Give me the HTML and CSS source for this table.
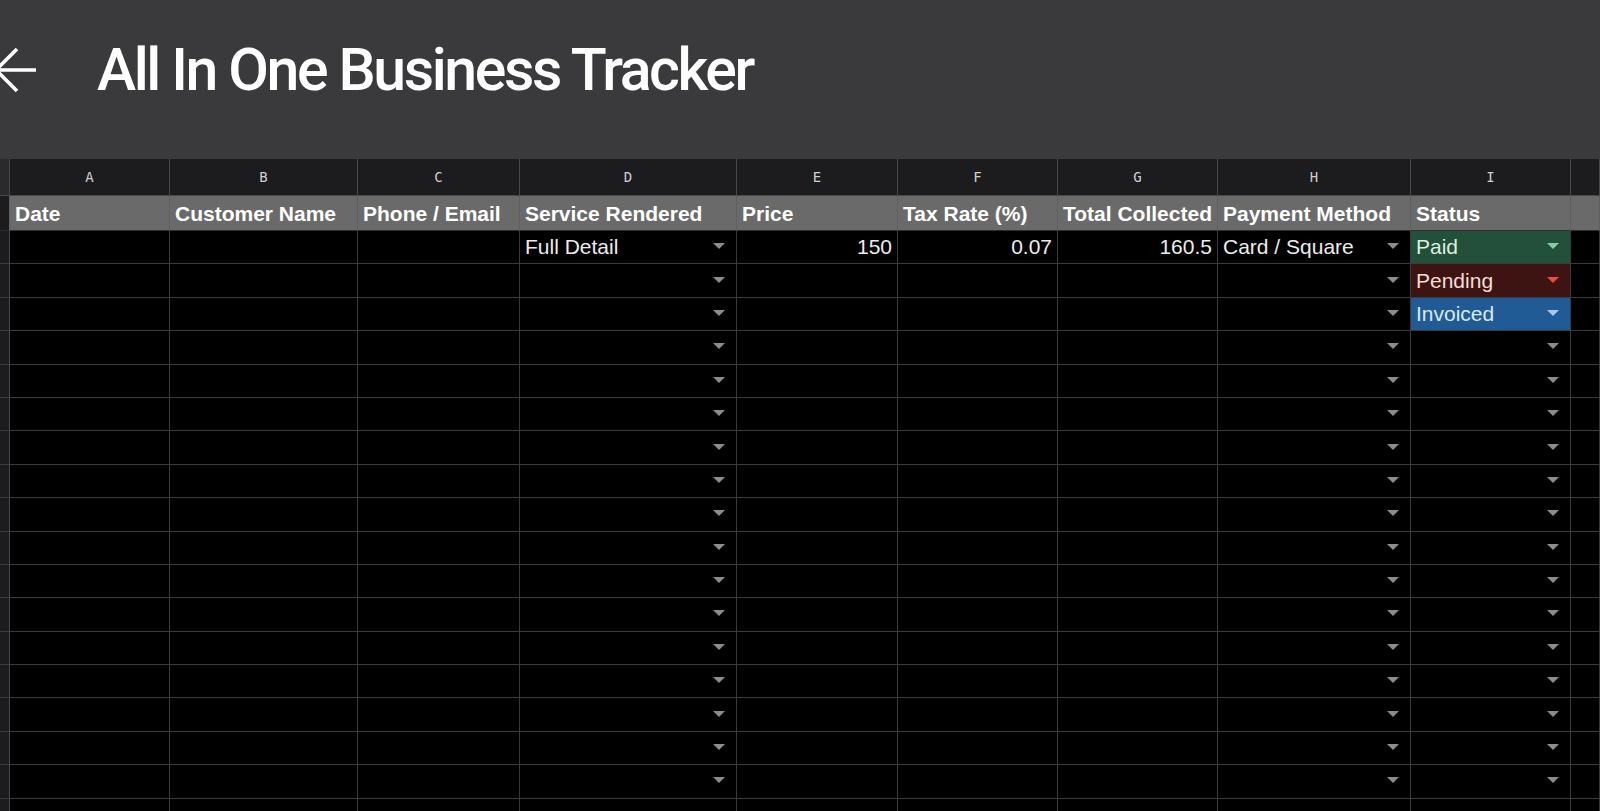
FILE: index.html
```html
<!DOCTYPE html>
<html>
<head>
<meta charset="utf-8">
<link rel="stylesheet" href="styles.css">
</head>
<body>
<header class="topbar">
  <svg class="back" width="44" height="46" viewBox="0 0 44 46">
    <path d="M42 23 H3 M23 2 L2 23 L23 44" fill="none" stroke="#fff" stroke-width="3.6" stroke-linejoin="miter"/>
  </svg>
  <h1 class="title">All In One Business Tracker</h1>
</header>
<main class="sheet">
  <div class="c rh lt"></div>
  <div class="c lt">A</div><div class="c lt">B</div><div class="c lt">C</div><div class="c lt">D</div><div class="c lt">E</div><div class="c lt">F</div><div class="c lt">G</div><div class="c lt">H</div><div class="c lt">I</div><div class="c lt"></div>

  <div class="c rh hd"></div>
  <div class="c hd">Date</div><div class="c hd">Customer Name</div><div class="c hd">Phone / Email</div><div class="c hd">Service Rendered</div><div class="c hd">Price</div><div class="c hd">Tax Rate (%)</div><div class="c hd">Total Collected</div><div class="c hd">Payment Method</div><div class="c hd">Status</div><div class="c hd"></div>

  <div class="c rh"></div>
  <div class="c"></div><div class="c"></div><div class="c"></div><div class="c dd">Full Detail</div><div class="c num">150</div><div class="c num">0.07</div><div class="c num">160.5</div><div class="c dd">Card / Square</div><div class="c dd paid">Paid</div><div class="c"></div>

  <div class="c rh"></div>
  <div class="c"></div><div class="c"></div><div class="c"></div><div class="c dd"></div><div class="c"></div><div class="c"></div><div class="c"></div><div class="c dd"></div><div class="c dd pending">Pending</div><div class="c"></div>

  <div class="c rh"></div>
  <div class="c"></div><div class="c"></div><div class="c"></div><div class="c dd"></div><div class="c"></div><div class="c"></div><div class="c"></div><div class="c dd"></div><div class="c dd invoiced">Invoiced</div><div class="c"></div>
</main>
<script src="rows.js"></script>
</body>
</html>
```

FILE: rows.js
```js
(function () {
  var sheet = document.querySelector('.sheet');
  var html = '';
  for (var i = 0; i < 15; i++) {
    html += '<div class="c rh"></div>' +
      '<div class="c"></div><div class="c"></div><div class="c"></div>' +
      '<div class="c dd"></div><div class="c"></div><div class="c"></div><div class="c"></div>' +
      '<div class="c dd"></div><div class="c dd"></div><div class="c"></div>';
  }
  sheet.insertAdjacentHTML('beforeend', html);
})();
```

FILE: styles.css
```css
html, body {
  margin: 0;
  padding: 0;
  background: #000;
  height: 811px;
  overflow: hidden;
}

.topbar {
  height: 159px;
  background: #3a3a3c;
  display: flex;
  align-items: center;
  box-sizing: border-box;
  padding-bottom: 20px;
}

.back {
  flex: none;
  margin-left: -6px;
  margin-right: 59px;
}

.title {
  margin: 0;
  font-family: "Roboto", "Lato", sans-serif;
  font-weight: 500;
  font-size: 59px;
  letter-spacing: -2.4px;
  color: #fff;
  line-height: 1;
}

.sheet {
  display: grid;
  grid-template-columns: 10px 160px 188px 162px 217px 161px 160px 160px 193px 160px 1fr;
  grid-template-rows: 37px 35px;
  grid-auto-rows: 33.4px;
  font-family: "Liberation Sans", Arial, sans-serif;
}

.c {
  box-sizing: border-box;
  border-right: 1px solid #3b3b3b;
  border-bottom: 1px solid #3b3b3b;
  color: #ececec;
  font-size: 21px;
  padding: 0 5px;
  display: flex;
  align-items: center;
  white-space: nowrap;
  overflow: hidden;
}

.rh {
  background: #1c1c1e;
  border-right-color: #48484a;
  padding: 0;
}

.lt {
  background: #1c1c1e;
  border-right-color: #48484a;
  border-bottom-color: #48484a;
  justify-content: center;
  font-family: "DejaVu Sans Mono", monospace;
  font-size: 14px;
  color: #cfcfcf;
}

.rh.lt {
  background: #2a2a2c;
}

.hd {
  background: #6a6a6a;
  border-right-color: #606060;
  border-bottom-color: #2e2e2e;
  font-weight: bold;
  color: #fff;
  padding-top: 1px;
}

.rh.hd {
  background: #1c1c1e;
}

.num {
  justify-content: flex-end;
}

.dd {
  justify-content: space-between;
  padding-right: 11px;
}

.dd::after {
  content: "";
  flex: none;
  margin-left: auto;
  width: 0;
  height: 0;
  border-left: 6px solid transparent;
  border-right: 6px solid transparent;
  border-top: 6px solid #8c8c8c;
  margin-top: -2px;
}

.paid {
  background: #22503a;
  color: #dcefdc;
}
.paid::after {
  border-top-color: #86cfa6;
}

.pending {
  background: #3d1411;
  color: #f7dcd8;
}
.pending::after {
  border-top-color: #ee4b3e;
}

.invoiced {
  background: #205b96;
  color: #dbe8f6;
}
.invoiced::after {
  border-top-color: #a5c9f2;
}
```
